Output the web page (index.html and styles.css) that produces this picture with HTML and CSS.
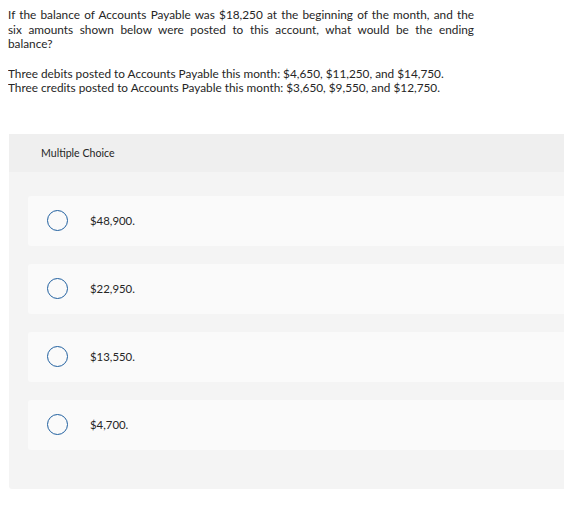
FILE: index.html
```html
<!DOCTYPE html>
<html>
<head>
<meta charset="utf-8">
<link rel="stylesheet" href="styles.css">
</head>
<body>
<div class="question">
  <p class="justify">If the balance of Accounts Payable was $18,250 at the beginning of the month, and the six&nbsp;amounts shown below were posted to this account, what would be the ending balance?</p>
  <p>Three debits posted to Accounts Payable this month: $4,650, $11,250, and $14,750.<br>Three credits posted to Accounts Payable this month: $3,650, $9,550, and $12,750.</p>
</div>
<div class="panel">
  <div class="panel-head">Multiple Choice</div>
  <div class="options">
    <div class="option"><span class="radio"></span><span class="label">$48,900.</span></div>
    <div class="option"><span class="radio"></span><span class="label">$22,950.</span></div>
    <div class="option"><span class="radio"></span><span class="label">$13,550.</span></div>
    <div class="option"><span class="radio"></span><span class="label">$4,700.</span></div>
  </div>
</div>
</body>
</html>
```
FILE: styles.css
```css
html {
  overflow: hidden;
}
body {
  margin: 8px 0 8px 8px;
  font-family: "Lato", "Liberation Sans", sans-serif;
  color: #262626;
  background: #fff;
}
.question {
  width: 466px;
  font-size: 11.8px;
  line-height: 14.5px;
}
.question p {
  margin: 0 0 15px 0;
}
.justify {
  text-align: justify;
}
.panel {
  margin: 38px 0 0 1px;
  background: #f4f4f4;
  border-radius: 0 0 0 3px;
  padding-bottom: 39px;
}
.panel-head {
  background: #efefef;
  height: 38px;
  display: flex;
  align-items: center;
  padding-left: 32px;
  font-size: 10.6px;
  color: #262626;
}
.options {
  display: flex;
  flex-direction: column;
  gap: 18px;
  padding: 24px 0 0 19px;
}
.option {
  height: 50px;
  background: #fafafa;
  border-radius: 3px 0 0 3px;
  display: flex;
  align-items: center;
  padding-left: 19px;
}
.radio {
  width: 19px;
  height: 19px;
  border: 1.5px solid #1f5f9f;
  border-radius: 50%;
  flex: none;
}
.label {
  margin-left: 22px;
  font-size: 11.4px;
  color: #262626;
}
```
